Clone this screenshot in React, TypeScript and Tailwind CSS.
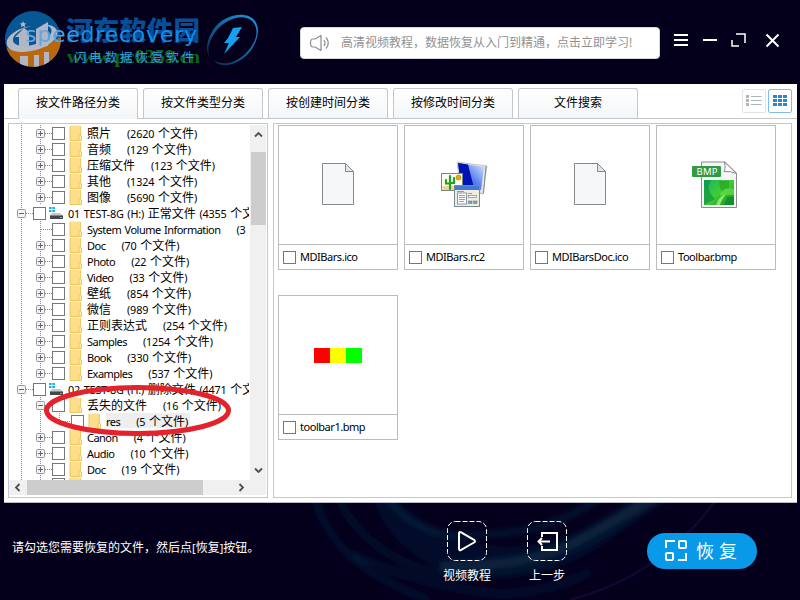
import React from "react";

const CJK = /([\u3000-\u9fff\uff00-\uffef]+)/;

/* Latin runs are set a little smaller than the Chinese runs around them. */
function Mixed({ text, tight }: { text: string; tight?: boolean }) {
  return (
    <>
      {text.split(CJK).map((part, i) =>
        CJK.test(part) ? (
          <span key={i} className="text-[12px]">{part}</span>
        ) : (
          <span key={i} className={tight ? "text-[11px] tracking-[-0.52px] [word-spacing:1px]" : "text-[10.8px] tracking-[-0.15px] [word-spacing:1px]"}>{part}</span>
        )
      )}
    </>
  );
}

type Kind = "closed" | "open" | "leaf" | "drive" | "child";
type Node = { name: string; count?: string; kind: Kind; selected?: boolean };

const nodes: Node[] = [
  { name: "照片", count: "(2620 个文件)", kind: "closed" },
  { name: "音频", count: "(129 个文件)", kind: "closed" },
  { name: "压缩文件", count: "(123 个文件)", kind: "closed" },
  { name: "其他", count: "(1324 个文件)", kind: "closed" },
  { name: "图像", count: "(5690 个文件)", kind: "closed" },
  { name: "01 TEST-8G (H:) 正常文件 (4355 个文件)", kind: "drive" },
  { name: "System Volume Information", count: "(3 个文件)", kind: "leaf" },
  { name: "Doc", count: "(70 个文件)", kind: "closed" },
  { name: "Photo", count: "(22 个文件)", kind: "closed" },
  { name: "Video", count: "(33 个文件)", kind: "closed" },
  { name: "壁纸", count: "(854 个文件)", kind: "closed" },
  { name: "微信", count: "(989 个文件)", kind: "closed" },
  { name: "正则表达式", count: "(254 个文件)", kind: "closed" },
  { name: "Samples", count: "(1254 个文件)", kind: "closed" },
  { name: "Book", count: "(330 个文件)", kind: "closed" },
  { name: "Examples", count: "(537 个文件)", kind: "closed" },
  { name: "02 TEST-8G (H:) 删除文件 (4471 个文件)", kind: "drive" },
  { name: "丢失的文件", count: "(16 个文件)", kind: "open" },
  { name: "res", count: "(5 个文件)", kind: "child", selected: true },
  { name: "Canon", count: "(4 个文件)", kind: "closed" },
  { name: "Audio", count: "(10 个文件)", kind: "closed" },
  { name: "Doc", count: "(19 个文件)", kind: "closed" },
];

function Expander({ x, open }: { x: number; open?: boolean }) {
  return (
    <g>
      <rect x={x - 3.5} y="4.5" width="8" height="8" rx="1" fill="#f4f4f6" stroke="#979797" />
      <path d={`M${x - 2} 8.5h5`} stroke="#53648a" />
      {!open && <path d={`M${x + 0.5} 6v5`} stroke="#53648a" />}
    </g>
  );
}

/* Dotted guide lines and the expander box in front of a row. */
function Guides({ kind }: { kind: Kind }) {
  const w = kind === "drive" ? 24 : kind === "child" ? 62 : 43;
  const dots = { stroke: "#8a8a8a", strokeDasharray: "1 1", fill: "none" };
  return (
    <svg width={w} height="16" className="shrink-0">
      <path d="M12.5 0V16" {...dots} />
      {kind !== "drive" && <path d="M31.5 0V16" {...dots} />}
      {kind === "child" && <path d="M50.5 0V8.5H61" {...dots} />}
      {kind === "drive" && <path d="M17 8.5H24" {...dots} />}
      {kind !== "drive" && kind !== "child" && <path d="M32 8.5H43" {...dots} />}
      {kind === "drive" && <Expander x={12} open />}
      {(kind === "closed" || kind === "open") && <Expander x={31} open={kind === "open"} />}
    </svg>
  );
}

function Folder() {
  return (
    <svg width="14" height="16" viewBox="0 0 14 16" className="shrink-0">
      <path d="M1 1.5Q1 .5 2 .5H10.5Q11.5 .5 11.5 1.5V10L12.5 11V15.5H1Z" fill="#fddf8b" />
      <path d="M1 1V15.5H9.5" stroke="#ecc65a" fill="none" />
      <path d="M11.5 1V10Q10 10 10 11.5V15.5H12.5V11L11.5 10" fill="#ffe9a8" stroke="#e7c04e" strokeWidth=".8" />
    </svg>
  );
}

function Drive() {
  return (
    <svg width="16" height="16" viewBox="0 0 16 16" className="shrink-0">
      <path d="M1 2h2.500v2H1zM4.300 2H7v2H4.300zM1 5h2.500v2H1zM4.300 5H7v2H4.300z" fill="#18b4e4" />
      <path d="M4 8H12L15 10.500V14H2V10.500Z" fill="#c5c8ca" />
      <path d="M2 10.500H15V14H2Z" fill="#3f474d" />
      <rect x="12" y="12" width="2" height="1" fill="#43e13a" />
    </svg>
  );
}

function TreeRow({ node }: { node: Node }) {
  const drive = node.kind === "drive";
  return (
    <div className="flex h-4 shrink-0 items-center whitespace-nowrap leading-4">
      <Guides kind={node.kind} />
      <span className="size-[13px] shrink-0 border border-[#777] bg-white" />
      <span className={drive ? "ml-[2px] mr-1 flex" : "ml-[4px] mr-1 flex"}>{drive ? <Drive /> : <Folder />}</span>
      <span className={node.selected ? "-mt-px flex h-[15px] items-center bg-[#eeeeee] pr-0.5" : "-mt-px flex items-center"}>
        <span><Mixed text={node.name} tight={!drive} /></span>
        {node.count && <span className="ml-4"><Mixed text={node.count} /></span>}
      </span>
    </div>
  );
}

function Chevron({ d, className }: { d: string; className?: string }) {
  return (
    <svg width="9" height="9" viewBox="0 0 9 9" className={className}>
      <path d={d} fill="none" stroke="#505050" strokeWidth="1.800" />
    </svg>
  );
}

function Tree() {
  return (
    <div className="flex h-[375px] w-[260px] flex-col border border-[#c4c7cc] bg-white pt-px">
      <div className="flex h-[355px]">
        <div className="flex w-[240px] flex-col overflow-hidden text-black">
          {nodes.map((n, i) => <TreeRow key={i} node={n} />)}
          <div className="flex h-4 shrink-0">
            <Guides kind="leaf" />
            <span className="mt-px size-[13px] border border-[#777]" />
            <span className="ml-[4px] flex"><Folder /></span>
          </div>
        </div>
        <div className="ml-px flex w-[16px] flex-col items-center justify-between bg-[#f0f0f0] pb-[5px] pt-[5px]">
          <Chevron d="M1 6.500L4.500 3L8 6.500" />
          <div className="mb-auto mt-[13px] h-[73px] w-[15px] bg-[#cdcdcd]" />
          <Chevron d="M1 2.500L4.500 6L8 2.500" />
        </div>
      </div>
      <div className="flex h-[15px] w-[257px] items-center bg-[#f0f0f0]">
        <Chevron d="M6.500 1L3 4.500L6.500 8" className="ml-[4px]" />
        <div className="ml-[5px] h-[15px] w-[176px] bg-[#cdcdcd]" />
        <Chevron d="M2.500 1L6 4.500L2.500 8" className="ml-[34px]" />
      </div>
    </div>
  );
}

function BlankPage() {
  return (
    <svg width="34" height="44" viewBox="0 0 34 44" className="-mt-[2px]">
      <path d="M1.500 1.500H24.500L32.500 9.500V42.500H1.500Z" fill="#f6f7f9" stroke="#85888d" />
      <path d="M24.500 1.500V9.500H32.500Z" fill="#e4e6ea" stroke="#85888d" />
    </svg>
  );
}

function ResourceIcon() {
  return (
    <svg width="48" height="48" viewBox="0 0 48 48" className="-mt-[2px] mr-px">
      <defs>
        <linearGradient id="screen" x1="0" x2="1" y1="1" y2="0">
          <stop offset="0" stopColor="#1c41d8" />
          <stop offset=".45" stopColor="#4d78ea" />
          <stop offset="1" stopColor="#dbe8ff" />
        </linearGradient>
      </defs>
      <path d="M38 30h6v4H33z" fill="#b9b9b9" />
      <path d="M17 2L47 6L43 34L20 27Z" fill="#e3e4e6" stroke="#aaa" strokeWidth=".6" />
      <path d="M18 3L44 7L41 30L21 26Z" fill="url(#screen)" />
      <path d="M18 3L28 4.600L34 28L21 26Z" fill="#0012b4" />
      <path d="M46 6L43.500 33" stroke="#888" />
      <rect x="1.500" y="13.500" width="21" height="17" fill="#fdfdf4" stroke="#7a8687" />
      <rect x="2.500" y="26" width="19" height="4" fill="#f2d58c" />
      <path d="M10 29V16M6 20V23.500H10M14 18V23H10" stroke="#22a122" strokeWidth="2.200" fill="none" strokeLinecap="round" />
      <circle cx="18.500" cy="17.500" r="2.500" fill="#e3a91d" stroke="#a97609" strokeWidth=".6" />
      <rect x="14.500" y="25.500" width="25" height="21" fill="#efede2" stroke="#7b8895" />
      <path d="M15 26h24v4H15z" fill="#4478d0" />
      <rect x="17.500" y="33" width="9" height="11" fill="#fff" stroke="#8a96a2" />
      <path d="M19 35.500h6M19 37.500h6M19 39.500h6M19 41.500h5M17 31.500h7M28 33.500h4" stroke="#7d8790" strokeWidth=".8" />
      <rect x="28.500" y="35.500" width="8" height="2" fill="#fff" stroke="#8490a8" strokeWidth=".8" />
      <rect x="28.500" y="41" width="3.500" height="2.500" fill="#52b9cc" stroke="#667" strokeWidth=".5" />
      <rect x="33.500" y="41" width="3.500" height="2.500" fill="#8ca6b8" stroke="#667" strokeWidth=".5" />
    </svg>
  );
}

function BmpIcon() {
  return (
    <svg width="48" height="48" viewBox="0 0 48 48" className="-mt-px mr-[2px]">
      <defs>
        <linearGradient id="leaf" x1="0" x2="1" y1="0" y2="1">
          <stop offset="0" stopColor="#18b560" />
          <stop offset=".5" stopColor="#3fce35" />
          <stop offset="1" stopColor="#158a25" />
        </linearGradient>
      </defs>
      <path d="M10.500 1H34L45.500 12V46.500H10.500Z" fill="#f7f7f7" stroke="#898b8d" />
      <path d="M33.500 1Q35 8 33 10.500Q40 10 45.500 12.500Z" fill="#fff" stroke="#898b8d" />
      <rect x="13" y="19" width="30" height="25" fill="url(#leaf)" />
      <path d="M13 19H20Q14 28 24 38L13 44Z" fill="#0a8a48" opacity=".6" />
      <path d="M28 20H38V28H43V33H34Q28 29 28 20Z" fill="#2d9a1e" opacity=".6" />
      <path d="M29 35Q31 25 43 28V34Q33 33 29 35Z" fill="#5fe04a" opacity=".8" />
      <path d="M25 44Q28 35 35 33Q30 40 29 44Z" fill="#a2f07c" opacity=".8" />
      <path d="M36 36H43V44H33Z" fill="#0d8a2e" opacity=".7" />
      <rect x="1" y="5" width="29" height="11" rx="1" fill="#309a45" />
      <text x="5.500" y="14" textLength="21" fontSize="9.500" fill="#fff" className="font-['Noto_Sans']">BMP</text>
    </svg>
  );
}

const cards = [
  { name: "MDIBars.ico", art: <BlankPage /> },
  { name: "MDIBars.rc2", art: <ResourceIcon /> },
  { name: "MDIBarsDoc.ico", art: <BlankPage /> },
  { name: "Toolbar.bmp", art: <BmpIcon /> },
  {
    name: "toolbar1.bmp",
    art: (
      <div className="flex">
        <i className="h-[15px] w-4 bg-[#ff0000]" />
        <i className="h-[15px] w-4 bg-[#ffff00]" />
        <i className="h-[15px] w-4 bg-[#00ff00]" />
      </div>
    ),
  },
];

function Files() {
  return (
    <div className="grid h-[375px] w-[519px] grid-cols-[repeat(4,120px)] content-start gap-x-[6px] gap-y-[25px] border border-[#c4c7cc] bg-white pl-1 pt-px">
      {cards.map((c) => (
        <div key={c.name} className="flex h-[145px] flex-col border border-[#bcbcbc]">
          <div className="flex h-[119px] items-center justify-center border-b border-[#bcbcbc]">{c.art}</div>
          <div className="flex flex-1 items-center pl-1">
            <span className="size-[13px] border border-[#777]" />
            <span className="ml-[4px] text-[11px] tracking-[-0.46px] text-black">{c.name}</span>
          </div>
        </div>
      ))}
    </div>
  );
}

const tabs = ["按文件路径分类", "按文件类型分类", "按创建时间分类", "按修改时间分类", "文件搜索"];

function Tabs() {
  return (
    <div className="flex h-[35px] items-end border-b border-[#c4c7cc] pl-[14px]">
      {tabs.map((t, i) => (
        <div
          key={t}
          className={
            "mr-[5px] flex w-[120px] justify-center rounded-t-[3px] border border-b-0 border-[#c4c7cc] bg-gradient-to-b from-white to-[#f3f6f8] pt-[5px] text-[12px] leading-[18px] text-black " +
            (i === 0 ? "-mb-px h-[31px]" : "h-[30px]")
          }
        >
          {t}
        </div>
      ))}
      <div className="mb-[5px] ml-auto mr-[5px] flex gap-[2px]">
        <svg width="24" height="24">
          <rect x=".5" y=".5" width="23" height="23" rx="1.500" fill="#fff" stroke="#e2e2e2" />
          <path d="M4 6h3v3H4zM4 10h3v3H4zM4 14h3v3H4z" fill="#b4b4b4" />
          <path d="M9 7.500H19.500M9 11.500H19.500M9 15.500H19.500" stroke="#aab4b4" />
        </svg>
        <svg width="24" height="24">
          <rect x=".5" y=".5" width="23" height="23" rx="1.500" fill="#fff" stroke="#7fbdea" />
          {[6, 10, 14].map((y) =>
            [5, 10, 15].map((x) => <rect key={`${x}-${y}`} x={x} y={y} width="4" height="3" fill="#2b87cb" />)
          )}
        </svg>
      </div>
    </div>
  );
}

function Logo() {
  return (
    <svg width="270" height="84" viewBox="0 0 270 84" className="shrink-0">
      <defs>
        <clipPath id="disc"><circle cx="33" cy="39" r="28" /></clipPath>
        <linearGradient id="ring" x1="1" x2="0" y1="0" y2="1">
          <stop offset="0" stopColor="#1b9ce8" />
          <stop offset="1" stopColor="#0c2548" />
        </linearGradient>
        <linearGradient id="word" x1="0" x2="1">
          <stop offset="0" stopColor="#6aabe0" />
          <stop offset=".22" stopColor="#4da2e4" />
          <stop offset=".35" stopColor="#1791e6" />
          <stop offset="1" stopColor="#0b8fea" />
        </linearGradient>
      </defs>
      <g clipPath="url(#disc)">
        <rect width="70" height="70" fill="#085793" />
        <path d="M0 46Q30 58 62 36V70H0Z" fill="#b9680e" />
        <path d="M19 48V37H15L24 28L29 32V48ZM36 48V29L48 22V46Z" fill="#b2b5c3" />
        <path d="M20 56h8V70h-8ZM34 55h5V70h-5ZM44 52h5V70h-5Z" fill="#b2b5c3" />
      </g>
      <path d="M31 26C15 29 5 37 7 45C10 57 44 53 56 38C61 30 53 23 42 25C50 25 54 29 50 35C42 46 16 50 13 41C12 35 20 29 31 26Z" fill="#b5b8c6" />
      <path d="M23 21l1 2.200 2.400.2-1.800 1.500.6 2.300-2.200-1.200-2 1.200.5-2.300-1.700-1.500 2.300-.2Z" fill="#b5b8c6" />
      <text x="66" y="39.500" textLength="134" fontSize="26.500" fontWeight="900" fill="#064f98" className="font-['Liberation_Serif','Noto_Sans_CJK_SC',serif]">河东软件园</text>
      <text x="67" y="63" textLength="133" lengthAdjust="spacingAndGlyphs" fontSize="18" fontWeight="700" fill="#08641c" className="font-['Liberation_Serif',serif]">www.pc0359.cn</text>
      <text x="25" y="42" textLength="172" fontSize="22" fill="url(#word)" className="font-['DejaVu_Sans',sans-serif]">speedrecovery</text>
      <text x="74" y="61.500" textLength="120" fontSize="12.500" fill="#2f9fdc" className="font-['Noto_Sans_CJK_SC',sans-serif]">闪电数据恢复软件</text>
      <path d="M213 30C223 14 247 10 255 21C264 34 251 59 232 64C223 67 216 64 214 60C222 66 235 64 246 53C257 42 260 29 252 21C243 13 226 19 216 31C208 42 206 52 211 59C205 52 206 41 213 30Z" fill="url(#ring)" />
      <path d="M233 28L242 27L236 37L240 37L224 54L229 43L224 43L228 38Z" fill="#15a1ef" />
    </svg>
  );
}

function Header() {
  return (
    <header className="flex h-[84px]">
      <Logo />
      <div className="ml-[30px] mt-[27px] flex h-8 w-[360px] items-center rounded-[4px] border border-[#d7d7dc] bg-white">
        <svg width="22" height="20" viewBox="0 0 22 20" className="ml-[8px]" fill="none" stroke="#8d8d8d" strokeWidth="1.200">
          <path d="M4 6H6L12 2.500V17.500L6 14H4Q1.500 14 1.500 10T4 6Z" strokeLinejoin="round" />
          <path d="M15 7Q17 10 15 13M17 4.500Q21.500 10 17 15.500" />
        </svg>
        <span className="ml-[10px] whitespace-nowrap text-[12px] text-[#929292]">高清视频教程，数据恢复从入门到精通，点击立即学习!</span>
      </div>
      <svg width="120" height="30" viewBox="0 0 120 30" className="ml-2.5 mt-[25px]" fill="none" stroke="#fff" strokeWidth="2">
        <path d="M4 10H18M4 15H18M4 20H18M33 15H47" />
        <path d="M66 9H75V18M62 15V21H69" strokeWidth="1.500" />
        <path d="M96.500 9.500L108.500 21.500M108.500 9.500L96.500 21.500" />
      </svg>
    </header>
  );
}

function Swirls() {
  return (
    <svg width="800" height="98" viewBox="0 0 800 98" className="absolute inset-x-0 bottom-0" fill="none">
      <defs>
        <filter id="glow" filterUnits="userSpaceOnUse" x="200" y="-30" width="600" height="160">
          <feGaussianBlur stdDeviation="3" />
        </filter>
      </defs>
      <g filter="url(#glow)">
        <path d="M390 -10Q430 40 500 44T640 -10L660 -10Q600 60 500 70T370 -10Z" fill="#050f30" opacity=".6" />
        <path d="M316 0Q330 40 360 62T430 98" stroke="#061935" strokeWidth="5" />
        <path d="M340 0Q366 50 430 70Q500 80 560 60" stroke="#06142f" strokeWidth="5" />
        <path d="M352 52Q420 84 500 92Q550 90 590 70" stroke="#071d3c" strokeWidth="4" />
        <path d="M386 -4Q415 30 455 33Q550 36 600 -6" stroke="#0a2d48" strokeWidth="3" />
        <path d="M440 64Q530 66 580 38T655 -6" stroke="#0a2541" strokeWidth="9" />
        <path d="M500 72Q560 68 600 40T668 -6" stroke="#081c3a" strokeWidth="3" />
      </g>
      <path d="M570 98C630 82 680 48 716 -2" stroke="#140630" strokeWidth="2.500" />
    </svg>
  );
}

function Action({ label, children }: { label: string; children: React.ReactNode }) {
  return (
    <div className="flex w-20 flex-col items-center">
      <svg width="40" height="40" viewBox="0 0 40 40" fill="none" stroke="#fff">
        <rect x=".5" y=".5" width="39" height="39" rx="8" strokeDasharray="5 2" />
        {children}
      </svg>
      <span className="mt-[6px] text-[12px] leading-[18px] text-white">{label}</span>
    </div>
  );
}

function Footer() {
  return (
    <footer className="relative flex h-[97px] overflow-hidden">
      <Swirls />
      <p className="relative ml-3 mt-[36px] w-[300px] whitespace-nowrap text-[12px] leading-[18px] text-white">
        请勾选您需要恢复的文件，然后点<span className="text-[11px]">[</span>恢复<span className="text-[11px]">]</span>按钮。
      </p>
      <div className="relative ml-[115px] mt-[18px] flex">
        <Action label="视频教程">
          <path d="M12 12.500V27.500Q12 30 14.200 28.800L27 21.500Q29 20.200 27 18.800L14.200 11.400Q12 10.200 12 12.500Z" strokeWidth="2" />
        </Action>
        <Action label="上一步">
          <path d="M15 16V12H30V29H15V25M11 20.500H23M15 17L11.500 20.500L15 24" strokeWidth="2" />
        </Action>
      </div>
      <button className="relative ml-[60px] mt-[30px] flex h-9 w-[110px] items-center rounded-full bg-[#0899e8] text-white">
        <svg width="24" height="24" viewBox="0 0 24 24" className="ml-[17px]" fill="none" stroke="#fff" strokeWidth="2">
          <path d="M2 9V2H11M14 21H22V14" />
          <rect x="15" y="2" width="7" height="7" rx="1" />
          <rect x="2" y="14" width="7" height="7" rx="1" />
        </svg>
        <span className="ml-[8px] whitespace-nowrap text-[18px] tracking-[5px]">恢复</span>
      </button>
    </footer>
  );
}

export default function App() {
  return (
    <div className="relative h-[600px] w-[800px] overflow-hidden bg-[#04001c] font-['Noto_Sans','Noto_Sans_CJK_SC',sans-serif]">
      <Header />
      <main className="ml-[4px] mr-[3px] h-[419px] border-b border-[#b9bcc8] bg-white">
        <Tabs />
        <div className="flex h-[383px] gap-[5px] pl-1 pt-1">
          <Tree />
          <Files />
        </div>
      </main>
      <Footer />
      <svg width="192" height="56" viewBox="0 0 192 56" className="pointer-events-none absolute left-[42px] top-[383px]">
        <ellipse cx="95.500" cy="27.500" rx="91" ry="23" fill="none" stroke="#e3222b" strokeWidth="5" />
      </svg>
    </div>
  );
}
